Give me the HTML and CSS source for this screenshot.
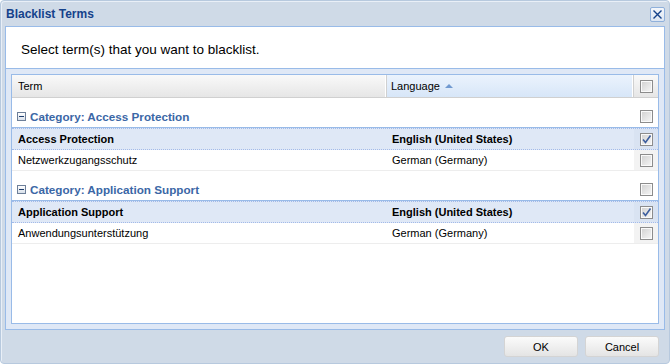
FILE: index.html
```html
<!DOCTYPE html>
<html lang="en">
<head>
    <meta charset="UTF-8">
    <title>Blacklist Terms</title>
    <link rel="stylesheet" href="styles.css">
</head>
<body>
    <div class="window">
        <div class="window-header">
            <span class="window-title">Blacklist Terms</span>
            <span class="close-tool">
                <svg width="11" height="11" viewBox="0 0 11 11"><path d="M1.5 1.5 L9.5 9.5 M9.5 1.5 L1.5 9.5" stroke="#15428b" stroke-width="1.4" fill="none"/></svg>
            </span>
        </div>

        <div class="window-body">
            <div class="intro">Select term(s) that you want to blacklist.</div>

            <div class="grid-wrap">
                <div class="grid">
                    <div class="grid-header">
                        <div class="hd hd-term">Term</div>
                        <div class="hd hd-lang sorted">Language <span class="sort-asc"></span></div>
                        <div class="hd hd-check"><span class="checkbox"></span></div>
                    </div>

                    <div class="group-row">
                        <div class="group-title"><span class="collapse"></span>Category: Access Protection</div>
                        <div class="cell-check"><span class="checkbox"></span></div>
                    </div>
                    <div class="row selected">
                        <div class="cell cell-term">Access Protection</div>
                        <div class="cell cell-lang">English (United States)</div>
                        <div class="cell-check"><span class="checkbox checked"><svg width="11" height="11" viewBox="0 0 11 11"><path d="M2 5.5 L4.5 8.5 L9.5 1.5" stroke="#3c5e9e" stroke-width="1.6" fill="none"/></svg></span></div>
                    </div>
                    <div class="row">
                        <div class="cell cell-term">Netzwerkzugangsschutz</div>
                        <div class="cell cell-lang">German (Germany)</div>
                        <div class="cell-check"><span class="checkbox"></span></div>
                    </div>

                    <div class="group-row">
                        <div class="group-title"><span class="collapse"></span>Category: Application Support</div>
                        <div class="cell-check"><span class="checkbox"></span></div>
                    </div>
                    <div class="row selected">
                        <div class="cell cell-term">Application Support</div>
                        <div class="cell cell-lang">English (United States)</div>
                        <div class="cell-check"><span class="checkbox checked"><svg width="11" height="11" viewBox="0 0 11 11"><path d="M2 5.5 L4.5 8.5 L9.5 1.5" stroke="#3c5e9e" stroke-width="1.6" fill="none"/></svg></span></div>
                    </div>
                    <div class="row">
                        <div class="cell cell-term">Anwendungsunterstützung</div>
                        <div class="cell cell-lang">German (Germany)</div>
                        <div class="cell-check"><span class="checkbox"></span></div>
                    </div>
                </div>
            </div>
        </div>

        <div class="window-footer">
            <button class="btn">OK</button>
            <button class="btn">Cancel</button>
        </div>
    </div>
</body>
</html>
```

FILE: styles.css
```css
body {
    margin: 0;
    font-family: "Liberation Sans", Arial, sans-serif;
    font-size: 11px;
    color: #000;
}

.window {
    width: 670px;
    height: 364px;
    box-sizing: border-box;
    background-color: #cfdae7;
    border: 1px solid #b7c9de;
    border-radius: 4px;
    box-shadow: inset 1px 1px 0 #e9eff7;
}

.window-header {
    height: 25px;
    display: flex;
    align-items: center;
    justify-content: space-between;
    padding: 0 4px 0 5px;
}

.window-title {
    font-weight: bold;
    font-size: 12px;
    color: #15428b;
    padding-top: 1px;
}

.close-tool {
    width: 13px;
    height: 13px;
    border: 1px solid #8fb0db;
    border-radius: 2px;
    background: linear-gradient(#f3f6fb, #dce6f3);
    display: flex;
    align-items: center;
    justify-content: center;
    margin-top: 1px;
}

.window-body {
    margin: 0 4px;
    border: 1px solid #99bbe8;
    background-color: #dfe8f6;
}

.intro {
    height: 37px;
    padding-top: 4px;
    line-height: 37px;
    background: white;
    border-bottom: 1px solid #99bbe8;
    padding-left: 15px;
    font-size: 13.5px;
}

.grid-wrap {
    padding: 5px;
}

.grid {
    height: 248px;
    border: 1px solid #99bbe8;
    background: white;
}

.grid-header,
.row {
    display: grid;
    grid-template-columns: 375px 247px 24px;
}

.grid-header {
    height: 22px;
    border-bottom: 1px solid #d0d0d0;
}

.hd {
    display: flex;
    align-items: center;
    background: linear-gradient(#f9f9f9, #e6e6e6);
    border-right: 1px solid #d0d0d0;
    box-shadow: inset -1px 0 0 #fff;
}

.hd-term {
    padding-left: 6px;
}

.hd-lang {
    padding-left: 4px;
}

.hd-lang.sorted {
    background: linear-gradient(#ebf3fd, #d7e6f8);
}

.hd-check {
    border-right: none;
    box-shadow: none;
    justify-content: center;
    padding-left: 1px;
}

.sort-asc {
    width: 0;
    height: 0;
    margin-left: 5px;
    border-left: 4px solid transparent;
    border-right: 4px solid transparent;
    border-bottom: 4px solid #7199d0;
}

.group-row {
    display: grid;
    grid-template-columns: 622px 24px;
    height: 29px;
    border-bottom: 1px solid #99bbe8;
}

.group-title {
    display: flex;
    align-items: center;
    padding: 8px 0 0 5px;
    font-weight: bold;
    font-size: 11.7px;
    color: #3b67a6;
}

.collapse {
    width: 7px;
    height: 7px;
    border: 1px solid #6d7f99;
    background: linear-gradient(#ffffff, #d8e0ea);
    margin-right: 4px;
    position: relative;
}

.collapse::after {
    content: "";
    position: absolute;
    left: 1px;
    top: 3px;
    width: 5px;
    height: 1px;
    background: #1e3d6e;
}

.group-row .cell-check {
    padding-top: 8px;
}

.row {
    height: 20px;
    border-bottom: 1px solid #ededed;
}

.row.selected {
    background-color: #dfe8f6;
    border-top: 1px dotted #a3bae9;
    border-bottom: 1px dotted #a3bae9;
    font-weight: bold;
}

.cell {
    display: flex;
    align-items: center;
    white-space: nowrap;
}

.cell-term {
    padding-left: 6px;
}

.cell-lang {
    padding-left: 5px;
}

.cell-check {
    display: flex;
    align-items: center;
    justify-content: center;
    padding-left: 1px;
}

.row .cell-check {
    background-color: #f3f3f3;
}

.row.selected .cell-check {
    background-color: #d9e3f2;
}

.checkbox {
    width: 11px;
    height: 11px;
    border: 1px solid #8c8c8c;
    background: linear-gradient(135deg, #d0d0d0, #f7f7f7);
    box-shadow: inset 0 0 0 1px #fafafa;
    display: flex;
    align-items: center;
    justify-content: center;
}

.window-footer {
    display: flex;
    justify-content: flex-end;
    gap: 7px;
    padding: 6px 10px 0 0;
}

.btn {
    width: 74px;
    height: 21px;
    border: 1px solid #d4d4d4;
    border-radius: 3px;
    background: linear-gradient(#fbfbfb, #e4e4e4);
    font-family: "Liberation Sans", Arial, sans-serif;
    font-size: 11px;
    color: #000;
    cursor: pointer;
}
```
